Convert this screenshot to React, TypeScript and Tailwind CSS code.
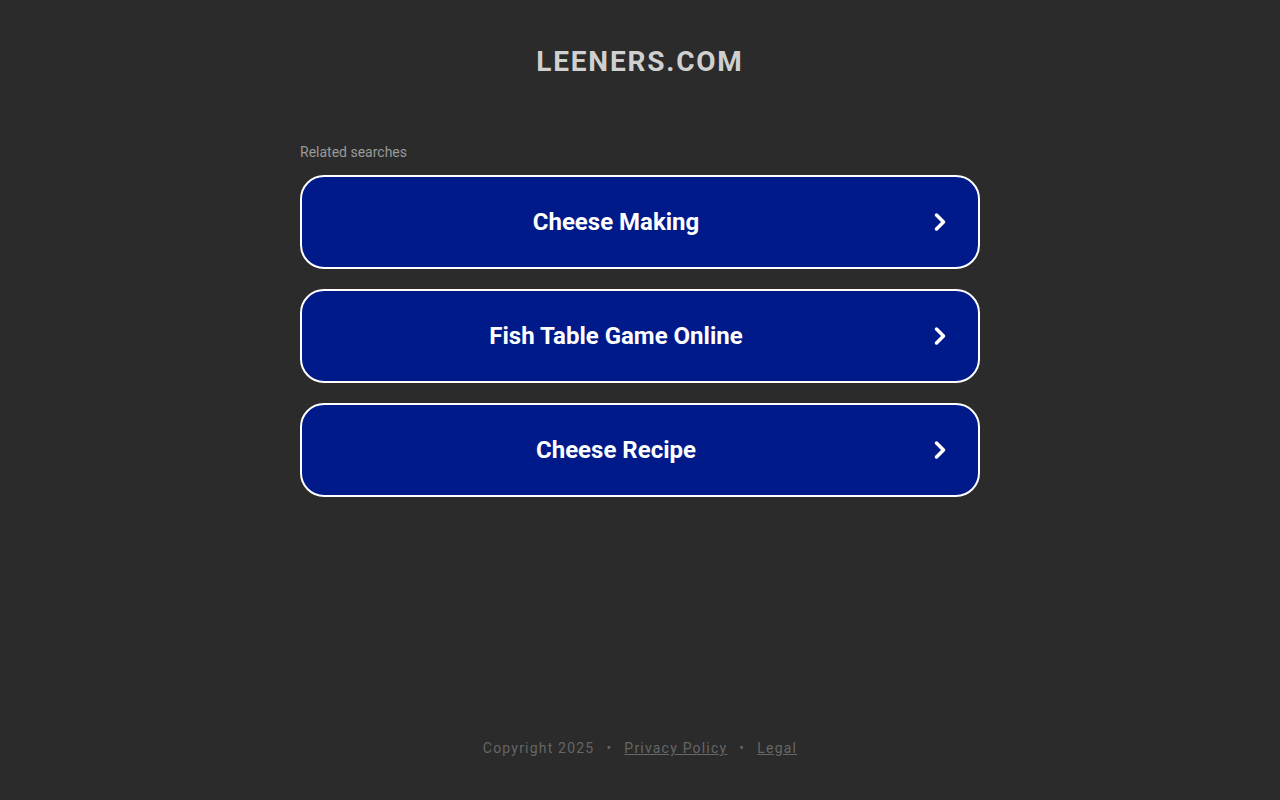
import { ChevronRight } from 'lucide-react';

// Related search links shown under the domain name.
const SEARCHES = ['Cheese Making', 'Fish Table Game Online', 'Cheese Recipe'];

export default function App() {
  return (
    <div className="flex min-h-[800px] flex-col bg-[#2b2b2b] font-['Roboto',sans-serif]">
      <header className="pt-[44px] text-center">
        <h1 className="text-[28px] leading-[36px] font-bold tracking-[1.8px] text-[#d0d0d0]">
          LEENERS.COM
        </h1>
      </header>

      <main className="mx-auto mt-[63px] w-[680px]">
        <p className="text-[14px] leading-[18px] text-[#9a9a9a]">Related searches</p>
        <div className="mt-[14px] flex flex-col gap-[20px]">
          {SEARCHES.map((term) => (
            <a
              key={term}
              href="#"
              className="flex h-[94px] items-center rounded-[24px] border-2 border-white bg-[#011a8a] pr-[24px] pl-[4px]"
            >
              <span className="flex-1 text-center text-[24px] font-bold text-white">{term}</span>
              <ChevronRight className="h-[28px] w-[28px] text-white" strokeWidth={3} />
            </a>
          ))}
        </div>
      </main>

      <footer className="mt-auto pb-[41px] text-center text-[14px] tracking-[1.2px] text-[#666666]">
        <span>Copyright 2025</span>
        <span className="mx-[12px]">•</span>
        <a href="#" className="underline">Privacy Policy</a>
        <span className="mx-[12px]">•</span>
        <a href="#" className="underline">Legal</a>
      </footer>
    </div>
  );
}
